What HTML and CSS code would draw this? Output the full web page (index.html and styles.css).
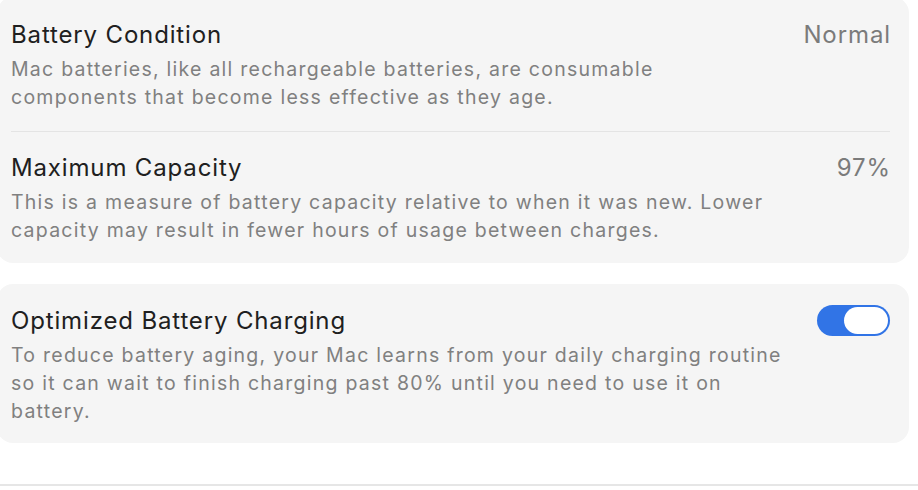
FILE: index.html
```html
<!DOCTYPE html>
<html lang="en">
<head>
<meta charset="utf-8">
<title>Battery</title>
<link rel="stylesheet" href="styles.css">
</head>
<body>
<div class="page">
  <section class="card card-top">
    <div class="row">
      <div class="text">
        <div class="title">Battery Condition</div>
        <div class="desc">Mac batteries, like all rechargeable batteries, are consumable<br>components that become less effective as they age.</div>
      </div>
      <div class="value">Normal</div>
    </div>
    <div class="sep"></div>
    <div class="row row-second">
      <div class="text">
        <div class="title">Maximum Capacity</div>
        <div class="desc">This is a measure of battery capacity relative to when it was new. Lower<br>capacity may result in fewer hours of usage between charges.</div>
      </div>
      <div class="value">97%</div>
    </div>
  </section>
  <section class="card card-bottom">
    <div class="row">
      <div class="text">
        <div class="title">Optimized Battery Charging</div>
        <div class="desc">To reduce battery aging, your Mac learns from your daily charging routine<br>so it can wait to finish charging past 80% until you need to use it on<br>battery.</div>
      </div>
      <div class="toggle"><div class="knob"></div></div>
    </div>
  </section>
  <div class="footer-line"></div>
</div>
</body>
</html>
```

FILE: styles.css
```css
* { box-sizing: border-box; }
html, body {
  margin: 0;
  padding: 0;
  background: #ffffff;
  overflow: hidden;
}
body {
  font-family: Inter, "Noto Sans", "Liberation Sans", sans-serif;
  width: 918px;
  height: 490px;
}
.page {
  display: flex;
  flex-direction: column;
}
.card {
  background: #f5f5f5;
  border-radius: 16px;
  margin-left: -3px;
  width: 912px;
  padding-left: 14px;
  padding-right: 19px;
}
.card-top {
  margin-top: -3px;
  padding-top: 24px;
  padding-bottom: 19px;
}
.card-bottom {
  margin-top: 21px;
  padding-top: 23px;
  padding-bottom: 18px;
}
.row {
  display: flex;
  justify-content: space-between;
  align-items: flex-start;
  padding-bottom: 20px;
}
.card-bottom .row,
.row-second {
  padding-bottom: 0;
}
.row-second {
  padding-top: 22px;
}
.title {
  font-size: 24px;
  line-height: 28px;
  color: #202020;
  letter-spacing: 0.85px;
}
.desc {
  margin-top: 6px;
  font-size: 19.5px;
  line-height: 28px;
  color: #808080;
  letter-spacing: 1.25px;
  white-space: nowrap;
}
.value {
  font-size: 24px;
  line-height: 28px;
  color: #7b7b7b;
  letter-spacing: 0.9px;
  margin-right: -1px;
}
.sep {
  height: 1px;
  background: #e4e4e4;
}
.toggle {
  flex: none;
  width: 73px;
  height: 31px;
  margin-top: -2px;
  border-radius: 16px;
  background: #3174e6;
  padding: 2px 2px 2px 27px;
}
.knob {
  width: 44px;
  height: 27px;
  border-radius: 14px;
  background: #ffffff;
}
.footer-line {
  margin-top: 41px;
  height: 2px;
  background: #e6e6e6;
}
```
